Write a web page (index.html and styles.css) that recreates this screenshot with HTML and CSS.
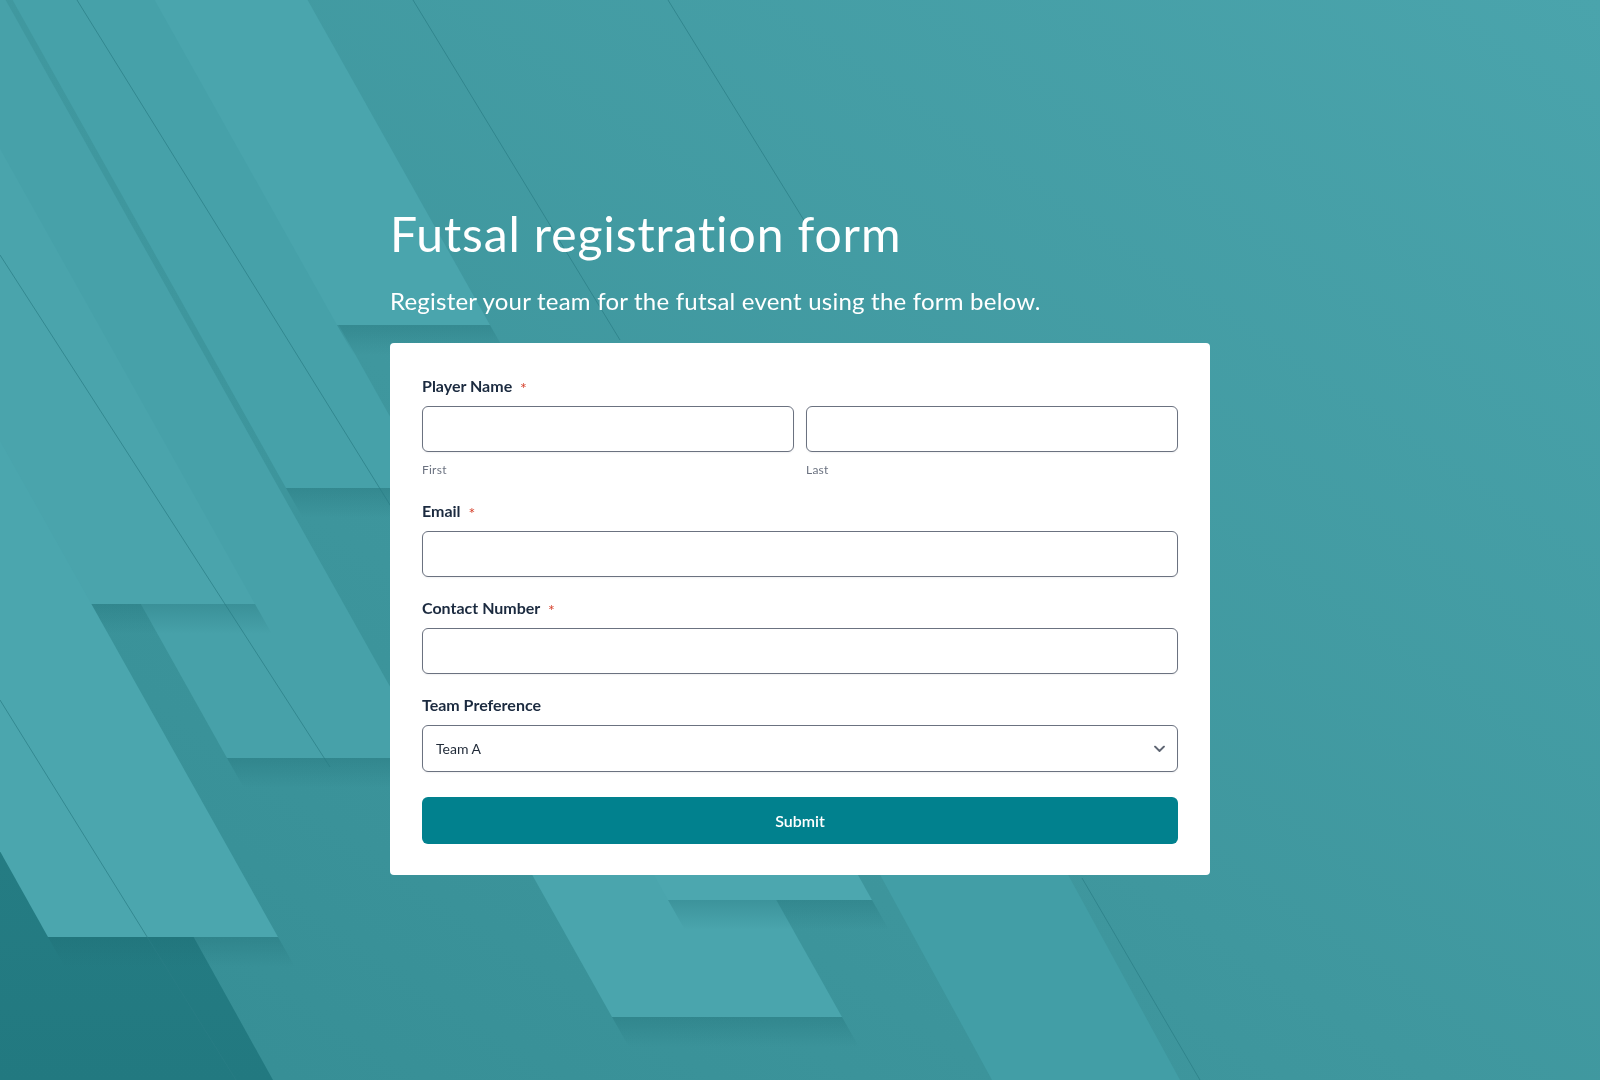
FILE: index.html
```html
<!DOCTYPE html>
<html lang="en">
  <head>
    <meta charset="UTF-8" />
    <meta name="viewport" content="width=device-width, initial-scale=1.0" />
    <title>Futsal registration form</title>

    <link rel="stylesheet" href="styles.css">
  </head>
  <body>
    <svg class="bg" viewBox="0 0 1600 1080" preserveAspectRatio="none" aria-hidden="true">
      <defs>
        <linearGradient id="base" x1="0" y1="1" x2="1" y2="0">
          <stop offset="0" stop-color="#358d94" />
          <stop offset="0.45" stop-color="#3f979e" />
          <stop offset="1" stop-color="#4aa4ac" />
        </linearGradient>
        <linearGradient id="dark" x1="0" y1="0" x2="0" y2="1">
          <stop offset="0" stop-color="#2c848b" />
          <stop offset="1" stop-color="#227980" />
        </linearGradient>
        <linearGradient id="shade" x1="0" y1="0" x2="0" y2="1">
          <stop offset="0" stop-color="#1d6a71" stop-opacity="0.3" />
          <stop offset="1" stop-color="#1d6a71" stop-opacity="0" />
        </linearGradient>
      </defs>
      <rect width="1600" height="1080" fill="url(#base)" />
      <!-- bottom left dark area -->
      <polygon points="-400,300 -160,300 273,1080 -400,1080" fill="url(#dark)" />
      <!-- light bands -->
      <polygon points="-203,-10 0,-10 430,758 227,758" fill="#47a1a9" />
      <polygon points="227,758 430,758 448,788 244,788" fill="url(#shade)" />
      <polygon points="-324,-10 -89,-10 255,604 20,604" fill="#4aa4ac" />
      <polygon points="20,604 255,604 272,634 37,634" fill="url(#shade)" />
      <polygon points="7,-10 151,-10 430,488 286,488" fill="#46a1a9" />
      <polygon points="286,488 430,488 447,518 303,518" fill="url(#shade)" />
      <polygon points="149,-10 302,-10 490,325 337,325" fill="#4aa5ad" />
      <polygon points="337,325 490,325 507,355 354,355" fill="url(#shade)" />
      <polygon points="-309,300 -79,300 278,937 48,937" fill="#4ba6ae" />
      <polygon points="48,937 278,937 295,967 65,967" fill="url(#shade)" />
      <polygon points="434,700 664,700 842,1017 612,1017" fill="#4aa5ad" />
      <polygon points="612,1017 842,1017 859,1047 629,1047" fill="url(#shade)" />
      <polygon points="500,600 704,600 872,900 668,900" fill="#4ca7af" />
      <polygon points="668,900 872,900 889,930 685,930" fill="url(#shade)" />
      <polygon points="872,860 1060,860 1180,1080 992,1080" fill="#429ea6" />
      <!-- thin lines -->
      <g class="bg-lines">
        <line x1="77" y1="0" x2="449" y2="600" />
        <line x1="0" y1="255" x2="330" y2="767" />
        <line x1="0" y1="700" x2="236" y2="1080" />
        <line x1="413" y1="0" x2="620" y2="340" />
        <line x1="668" y1="0" x2="810" y2="230" />
        <line x1="1082" y1="878" x2="1200" y2="1080" />
      </g>
    </svg>

    <main class="page">
      <div class="wrap">
        <h1 class="title">Futsal registration form</h1>
        <p class="subtitle">Register your team for the futsal event using the form below.</p>

        <form class="card">
          <div class="field">
            <label class="label">Player Name <span class="req">*</span></label>
            <div class="name-row">
              <div>
                <input class="input" type="text" />
                <span class="hint">First</span>
              </div>
              <div>
                <input class="input" type="text" />
                <span class="hint">Last</span>
              </div>
            </div>
          </div>

          <div class="field">
            <label class="label">Email <span class="req">*</span></label>
            <input class="input" type="email" />
          </div>

          <div class="field">
            <label class="label">Contact Number <span class="req">*</span></label>
            <input class="input" type="tel" />
          </div>

          <div class="field">
            <label class="label">Team Preference</label>
            <div class="select-wrap">
              <select class="input select">
                <option>Team A</option>
                <option>Team B</option>
              </select>
              <svg class="chevron" width="11" height="7" viewBox="0 0 11 7">
                <path d="M1 1l4.5 4.5L10 1" fill="none" stroke="#5f6673" stroke-width="1.8" stroke-linecap="round" stroke-linejoin="round" />
              </svg>
            </div>
          </div>

          <button class="submit" type="button">Submit</button>
        </form>
      </div>
    </main>
  </body>
</html>
```

FILE: styles.css
```css
body {
  margin: 0;
  font-family: Lato, "Noto Sans", sans-serif;
  font-variant-ligatures: none;
  background: #3f979e;
}
.bg {
  position: fixed;
  top: 0;
  left: 0;
  width: 100%;
  height: 100%;
  z-index: -1;
}
.bg-lines line {
  stroke: #2a7d85;
  stroke-width: 1;
  opacity: 0.7;
}
.page {
  min-height: 100vh;
  display: flex;
  align-items: center;
  justify-content: center;
}
.wrap {
  width: 820px;
}
.title {
  margin: 0;
  font-size: 48px;
  font-weight: 400;
  line-height: 1.2;
  letter-spacing: 0.9px;
  color: #fff;
}
.subtitle {
  margin: 25px 0 27px;
  font-size: 24px;
  font-weight: 400;
  line-height: 1.2;
  letter-spacing: 0.22px;
  color: #fff;
}
.card {
  background: #fff;
  border-radius: 4px;
  padding: 31px 32px;
}
.field + .field {
  margin-top: 19px;
}
.label {
  display: block;
  margin-bottom: 8px;
  font-size: 16px;
  font-weight: 700;
  line-height: 24px;
  color: #1b2a3f;
}
.req {
  margin-left: 4px;
  font-size: 16px;
  font-weight: 400;
  line-height: 1;
  color: #d6402b;
  vertical-align: -2px;
}
.input {
  display: block;
  width: 100%;
  height: 46px;
  box-sizing: border-box;
  padding: 0 13px;
  border: 1px solid #6b7280;
  border-radius: 6px;
  background: #fff;
  box-shadow: 0 1px 2px rgba(17, 24, 39, 0.06);
  font-family: inherit;
  font-size: 14px;
  color: #1f2937;
}
.name-row {
  display: grid;
  grid-template-columns: 1fr 1fr;
  gap: 12px;
}
.hint {
  display: block;
  margin-top: 7px;
  font-size: 12px;
  line-height: 21px;
  letter-spacing: 0.02em;
  color: #6b7280;
}
.select-wrap {
  position: relative;
}
.select {
  height: 47px;
  appearance: none;
  -webkit-appearance: none;
}
.chevron {
  position: absolute;
  top: 50%;
  right: 13px;
  transform: translateY(-50%);
  pointer-events: none;
}
.submit {
  display: block;
  width: 100%;
  height: 47px;
  margin-top: 25px;
  border: none;
  border-radius: 6px;
  background: #01818e;
  font-family: inherit;
  font-size: 16px;
  font-weight: 600;
  color: #fff;
  cursor: pointer;
}
```
